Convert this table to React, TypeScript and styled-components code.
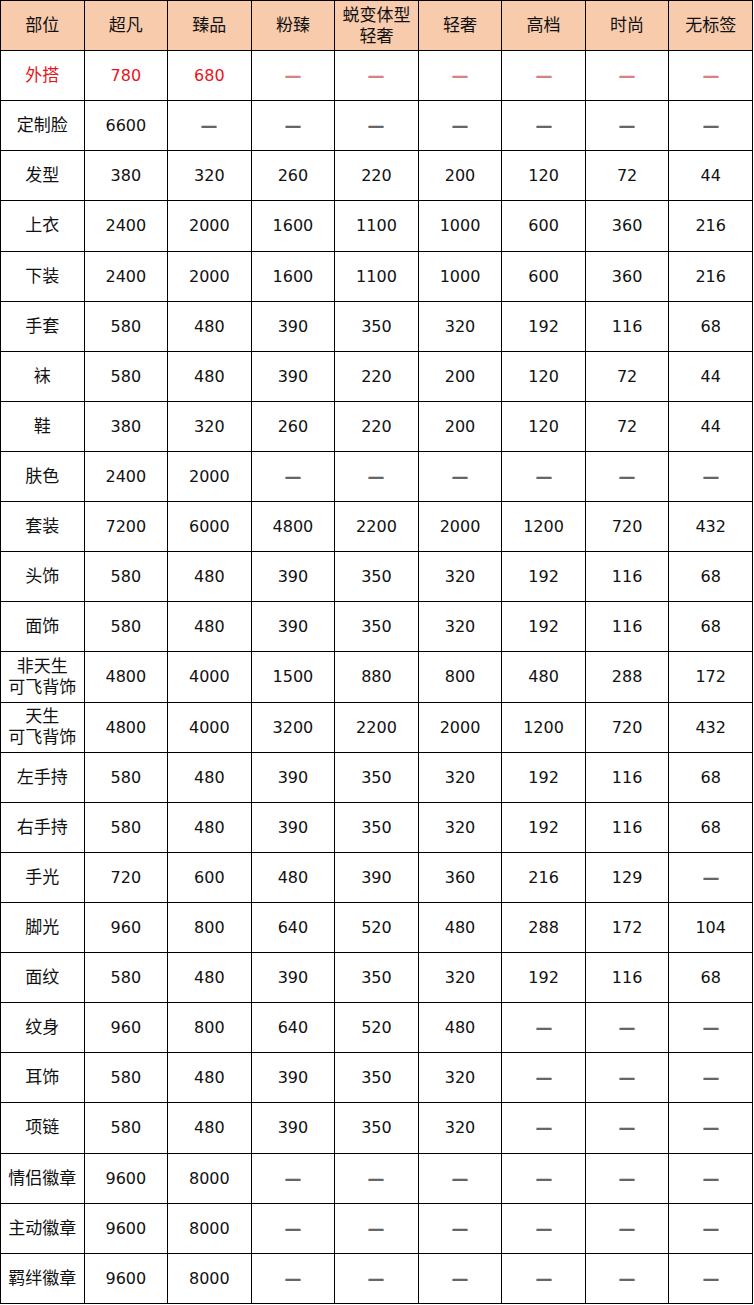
import { createGlobalStyle } from 'styled-components';
import styled from 'styled-components';

const GlobalStyle = createGlobalStyle`
  html, body {
    margin: 0;
    padding: 0;
    background: #fff;
  }
  body {
    font-family: "DejaVu Sans", "Noto Sans CJK SC", sans-serif;
  }
`;

const D = '—';

const headers = ['部位', '超凡', '臻品', '粉臻', '蜕变体型\n轻奢', '轻奢', '高档', '时尚', '无标签'];

const rows: string[][] = [
  ['外搭', '780', '680', D, D, D, D, D, D],
  ['定制脸', '6600', D, D, D, D, D, D, D],
  ['发型', '380', '320', '260', '220', '200', '120', '72', '44'],
  ['上衣', '2400', '2000', '1600', '1100', '1000', '600', '360', '216'],
  ['下装', '2400', '2000', '1600', '1100', '1000', '600', '360', '216'],
  ['手套', '580', '480', '390', '350', '320', '192', '116', '68'],
  ['袜', '580', '480', '390', '220', '200', '120', '72', '44'],
  ['鞋', '380', '320', '260', '220', '200', '120', '72', '44'],
  ['肤色', '2400', '2000', D, D, D, D, D, D],
  ['套装', '7200', '6000', '4800', '2200', '2000', '1200', '720', '432'],
  ['头饰', '580', '480', '390', '350', '320', '192', '116', '68'],
  ['面饰', '580', '480', '390', '350', '320', '192', '116', '68'],
  ['非天生\n可飞背饰', '4800', '4000', '1500', '880', '800', '480', '288', '172'],
  ['天生\n可飞背饰', '4800', '4000', '3200', '2200', '2000', '1200', '720', '432'],
  ['左手持', '580', '480', '390', '350', '320', '192', '116', '68'],
  ['右手持', '580', '480', '390', '350', '320', '192', '116', '68'],
  ['手光', '720', '600', '480', '390', '360', '216', '129', D],
  ['脚光', '960', '800', '640', '520', '480', '288', '172', '104'],
  ['面纹', '580', '480', '390', '350', '320', '192', '116', '68'],
  ['纹身', '960', '800', '640', '520', '480', D, D, D],
  ['耳饰', '580', '480', '390', '350', '320', D, D, D],
  ['项链', '580', '480', '390', '350', '320', D, D, D],
  ['情侣徽章', '9600', '8000', D, D, D, D, D, D],
  ['主动徽章', '9600', '8000', D, D, D, D, D, D],
  ['羁绊徽章', '9600', '8000', D, D, D, D, D, D],
];

const Table = styled.table`
  width: 753px;
  border-collapse: collapse;
  table-layout: fixed;
  font-size: 16px;
  color: #111;
`;

const Row = styled.tr`
  height: 50.12px;
`;

const HeadCell = styled.th`
  background: #f8cbad;
  border: 1.3px solid #000;
  font-weight: normal;
  font-size: 17px;
  text-align: center;
  vertical-align: middle;
  padding: 0;
  line-height: 21px;
  white-space: pre-line;
`;

const Cell = styled.td<{ $red?: boolean; $label?: boolean }>`
  border: 1.3px solid #000;
  text-align: center;
  vertical-align: middle;
  padding: 0;
  font-size: ${(p) => (p.$label ? '17px' : '16px')};
  line-height: 21px;
  white-space: pre-line;
  color: ${(p) => (p.$red ? '#e8141b' : '#111')};
`;

const Dash = styled.span<{ $red?: boolean }>`
  display: inline-block;
  font-family: "DejaVu Sans", sans-serif;
  font-weight: bold;
  color: ${(p) => (p.$red ? '#d98282' : '#666')};
  transform: scale(1.06, 1.15);
`;

export default function App() {
  return (
    <>
      <GlobalStyle />
      <Table>
        <thead>
          <Row>
            {headers.map((h) => (
              <HeadCell key={h}>{h}</HeadCell>
            ))}
          </Row>
        </thead>
        <tbody>
          {rows.map((row, i) => (
            <Row key={row[0]}>
              {row.map((v, j) => (
                <Cell key={j} $red={i === 0} $label={j === 0}>
                  {v === D ? <Dash $red={i === 0}>{D}</Dash> : v}
                </Cell>
              ))}
            </Row>
          ))}
        </tbody>
      </Table>
    </>
  );
}
